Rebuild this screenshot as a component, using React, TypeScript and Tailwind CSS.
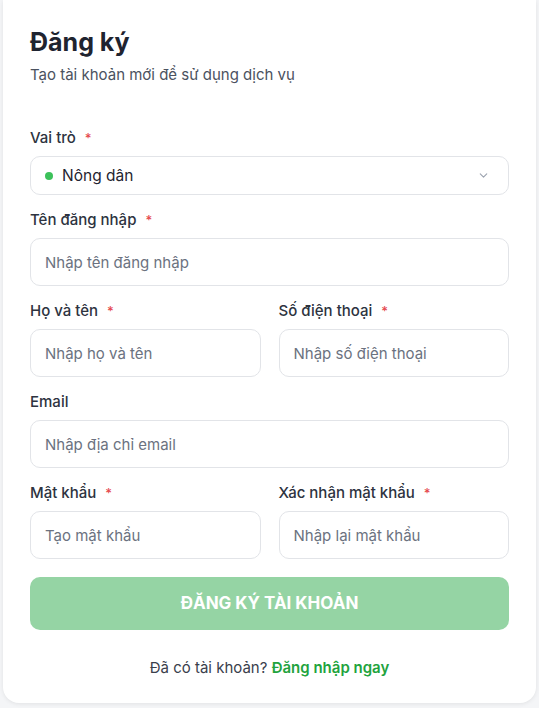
import React from "react";

function Label({ text, required }: { text: string; required?: boolean }) {
  return (
    <div className="mb-2 flex h-5 items-center text-[15px] font-medium leading-5 text-[#2d3340]">
      <span>{text}</span>
      {required && <span className="ml-[9px] text-[13px] text-[#e5484d]">*</span>}
    </div>
  );
}

function Field({ placeholder }: { placeholder: string }) {
  return (
    <input
      placeholder={placeholder}
      className="h-12 w-full rounded-[10px] border border-[#e2e4e8] bg-white px-[14px] text-[15px] text-[#2d3340] outline-none placeholder:text-[#6b7280]"
    />
  );
}

export default function App() {
  return (
    <div
      className="min-h-[708px] w-full bg-[#f4f5f7] px-[3px] pb-[5px]"
      style={{ fontFamily: "Inter, 'Noto Sans', sans-serif" }}
    >
      <div className="rounded-b-2xl bg-white px-[27px] pb-[25px] pt-[26px] shadow-[0_1px_4px_rgba(0,0,0,0.08)]">
        <h1 className="text-[25px] font-bold leading-8 text-[#1f2430]">Đăng ký</h1>
        <p className="mt-[7px] text-[15px] leading-5 text-[#4b5260]">Tạo tài khoản mới để sử dụng dịch vụ</p>

        <div className="mt-[43px]">
          <Label text="Vai trò" required />
          <div className="flex h-[39px] items-center justify-between rounded-[10px] border border-[#e2e4e8] px-[14px]">
            <div className="flex items-center gap-[9px]">
              <span className="h-2 w-2 rounded-full bg-[#3cc15a]" />
              <span className="text-[15.5px] text-[#1f2430]">Nông dân</span>
            </div>
            <svg width="13" height="13" viewBox="0 0 24 24" fill="none" stroke="#9ca3af" strokeWidth="2" strokeLinecap="round" strokeLinejoin="round" className="mr-[4px]">
              <path d="M6 9l6 6 6-6" />
            </svg>
          </div>
        </div>

        <div className="mt-[15px]">
          <Label text="Tên đăng nhập" required />
          <Field placeholder="Nhập tên đăng nhập" />
        </div>

        <div className="mt-[15px] grid grid-cols-2 gap-x-[18px]">
          <div>
            <Label text="Họ và tên" required />
            <Field placeholder="Nhập họ và tên" />
          </div>
          <div>
            <Label text="Số điện thoại" required />
            <Field placeholder="Nhập số điện thoại" />
          </div>
        </div>

        <div className="mt-[15px]">
          <Label text="Email" />
          <Field placeholder="Nhập địa chỉ email" />
        </div>

        <div className="mt-[15px] grid grid-cols-2 gap-x-[18px]">
          <div>
            <Label text="Mật khẩu" required />
            <Field placeholder="Tạo mật khẩu" />
          </div>
          <div>
            <Label text="Xác nhận mật khẩu" required />
            <Field placeholder="Nhập lại mật khẩu" />
          </div>
        </div>

        <button className="mt-[18px] flex h-[53px] w-full items-center justify-center rounded-[10px] bg-[#95d4a4] text-[17px] font-bold text-white">
          ĐĂNG KÝ TÀI KHOẢN
        </button>

        <p className="mt-[28px] text-center text-[15px] leading-5 text-[#3a404c]">
          Đã có tài khoản? <span className="font-semibold text-[#22a33d]">Đăng nhập ngay</span>
        </p>
      </div>
    </div>
  );
}
